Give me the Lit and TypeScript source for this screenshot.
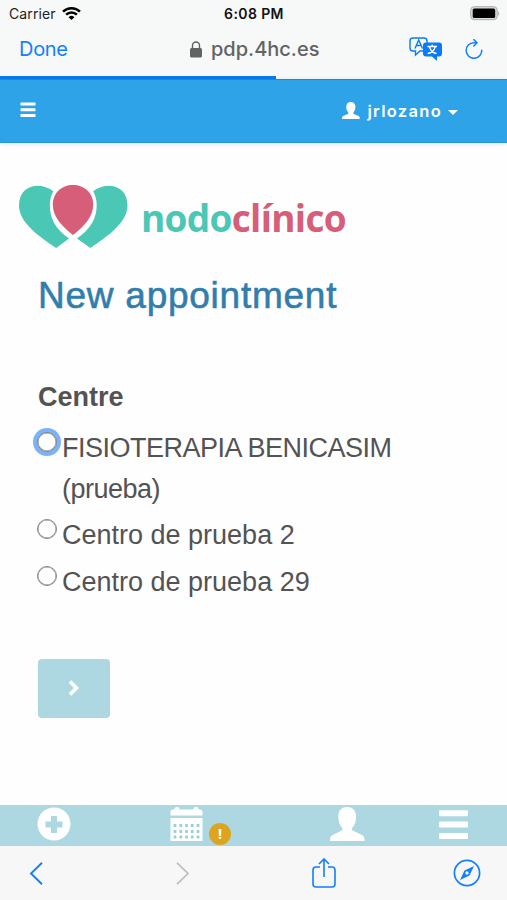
import { LitElement, html, css, svg } from "lit";
import { customElement, state } from "lit/decorators.js";
import { classMap } from "lit/directives/class-map.js";

const person = svg`<path d="M17 0C11.800 0 8.300 3.400 8.300 9.400c0 5 1.300 8.600 3.900 11.400.6 1.200.3 2.300-.9 3L3.200 27.700C.9 28.900 0 30 0 34h34.600c0-4-.9-5.100-3.200-6.300l-8.300-3.900c-1.200-.7-1.500-1.800-.9-3 2.600-2.800 3.900-6.400 3.900-11.400C26.100 3.400 22.400 0 17 0Z"/>`;

@customElement("app-root")
export class AppRoot extends LitElement {
  static styles = css`
    :host { display: flex; flex-direction: column; width: 507px; height: 900px; overflow: hidden; background: #fefefe; font-family: "Liberation Sans", Arial, sans-serif; color: #535353; }
    * { box-sizing: border-box; }
    svg { display: block; flex: none; }
    .status { height: 27px; flex: none; display: grid; grid-template-columns: 1fr auto 1fr; align-items: center; background: #f7f8f8; padding: 0 7px 0 9px; font: 14px/27px Inter, sans-serif; color: #222; }
    .carrier { display: flex; align-items: center; gap: 6px; letter-spacing: .1px; }
    .time { font-weight: 600; color: #111; letter-spacing: .4px; margin-right: 1px; }
    .battery { justify-self: end; }
    .browser { height: 49px; flex: none; display: flex; align-items: center; background: #f7f8f8; padding: 0 24px 5px 19px; font: 20px/44px Inter, sans-serif; }
    .done { color: #127ffb; width: 171px; letter-spacing: -.3px; }
    .domain { color: #636363; font-weight: 500; margin-left: 9px; width: 198px; }
    .reload { margin-left: 23px; }
    .progress { height: 3px; flex: none; background: #f7f8f8; }
    .loaded { height: 3px; width: 276px; background: #087bec; }
    .nav { height: 64px; flex: none; display: flex; align-items: center; background: #2fa3e7; border-top: 1px solid #2689c7; border-bottom: 1px solid #2896d9; box-shadow: 0 1px 5px #0000001c; padding: 0 49px 2px 20px; color: white; }
    .user { margin-left: auto; display: flex; align-items: center; font: 600 16.500px/20px Inter, sans-serif; letter-spacing: 1.300px; }
    .name { margin: 2px 6px 0 7px; }
    .caret { margin-top: 4px; }
    main { height: 662px; flex: none; padding: 42px 38px 0; }
    .brand { display: flex; margin-left: -19px; height: 64px; }
    .word { font: 700 37px/65px "Open Sans", sans-serif; letter-spacing: -.7px; margin-left: 12px; color: #4bc7b5; white-space: nowrap; }
    .accent { color: #d65e79; }
    h1 { margin: 25px 0 0; font-weight: 400; font-size: 37px; line-height: 44px; letter-spacing: .75px; color: #317eac; -webkit-text-stroke: .6px #317eac; white-space: nowrap; }
    h2 { margin: 63px 0 0; font-size: 27px; line-height: 32px; }
    .option { display: flex; align-items: flex-start; margin-top: 6px; font-size: 27px; line-height: 40.500px; }
    .first { margin-top: 15px; letter-spacing: -.5px; }
    .radio { width: 20px; height: 20px; flex: none; border: 1.500px solid #858585; border-radius: 50%; background: white; margin: 4px 5px 0 -1px; box-shadow: inset 0 0 0 .5px #858585; }
    .focus { box-shadow: 0 0 0 4px #7ab4f6, inset 0 0 0 .5px #858585; }
    .next { display: flex; align-items: center; justify-content: center; width: 72px; height: 59px; margin-top: 57px; padding: 0 0 1px; border: 0; border-radius: 4px; background: #add8e1; }
    .tabs { height: 41px; flex: none; display: flex; align-items: flex-start; background: #add8e1; padding: 2px 39px 0 37px; }
    .calendar { margin-left: 99px; }
    .alert { display: grid; place-items: center; width: 22px; height: 22px; margin: 16px 0 0 6px; border-radius: 50%; background: #dca51f; color: white; font: 700 14px/22px "Open Sans", sans-serif; }
    .profile { margin-left: 99px; }
    .menu { margin: 3px 0 0 74px; }
    .tools { height: 54px; flex: none; display: flex; align-items: center; background: #f7f7f7; padding: 0 26px 0 29px; }
    .forward { margin-left: 133px; }
    .share { margin-left: 122px; }
    .compass { margin-left: auto; }
  `;

  @state() private focused = 0;
  private centres = ["FISIOTERAPIA BENICASIM (prueba)", "Centro de prueba 2", "Centro de prueba 29"];

  render() {
    return html`
      <div class="status">
        <div class="carrier"><span>Carrier</span>
          <svg width="19" height="15" viewBox="0 0 19 15" fill="none" stroke="#000" stroke-width="2.500"><path d="M1 5.600a12.200 12.200 0 0 1 17 0M4.100 8.700a7.800 7.800 0 0 1 10.800 0"/><path d="M9.500 14 6.600 11.200a4.200 4.200 0 0 1 5.800 0Z" fill="#000" stroke="none"/></svg>
        </div>
        <span class="time">6:08 PM</span>
        <svg class="battery" width="30" height="15" viewBox="0 0 30 15"><rect x=".7" y=".7" width="26.500" height="13" rx="3.500" fill="#ddd" stroke="#aaa"/><rect x="2.700" y="2.500" width="22.500" height="9.500" rx="1.500"/><path d="M28.200 5v5q2-2.500 0-5" fill="#aaa"/></svg>
      </div>
      <div class="browser">
        <span class="done">Done</span>
        <svg width="12" height="17" viewBox="0 0 12 17"><rect y="7" width="12" height="9.500" rx="1.500" fill="#636363"/><path d="M2.500 8V4.500a3.500 3.500 0 0 1 7 0V8" fill="none" stroke="#636363" stroke-width="1.400"/></svg>
        <span class="domain">pdp.4hc.es</span>
        <svg width="33" height="24" viewBox="0 0 33 24"><path d="M4 1h11q3 0 3 3v7q0 3-3 3h-4l-4.500 4v-4H4q-3 0-3-3V4q0-3 3-3Z" fill="none" stroke="#087bf5" stroke-width="1.400"/><path d="m6 11.500 3.700-8.500 3.800 8.500M7.300 8.500h4.900" fill="none" stroke="#087bf5" stroke-width="1.400"/><path d="M17 5.500h13q3 0 3 3v8q0 3-3 3h-2V24l-5-4.500h-6q-3 0-3-3v-8q0-3 3-3Z" fill="#087bf5"/><path d="M18.500 9.500h9.500M23.200 7.500v2M20.500 10c1 3.500 4 6 7 6.500M26.200 10c-1 3.500-4.500 6-7.500 6.500" fill="none" stroke="#fff" stroke-width="1.300"/></svg>
        <svg class="reload" width="18" height="20" viewBox="0 0 18 20" fill="none" stroke="#127ffb" stroke-width="1.500"><path d="M16.700 10.700A7.800 7.800 0 1 1 8.900 3.700h3"/><path d="M8.400.2 12 3.800 8.400 7.500"/></svg>
      </div>
      <div class="progress"><div class="loaded"></div></div>
      <div class="nav">
        <svg width="16" height="16" viewBox="0 0 16 16" fill="#fff"><rect x=".5" y=".5" width="15" height="3" rx=".6"/><rect x=".5" y="6.200" width="15" height="3" rx=".6"/><rect x=".5" y="12" width="15" height="3" rx=".6"/></svg>
        <div class="user">
          <svg width="18" height="17" viewBox="0 0 35 34" preserveAspectRatio="none" fill="#fff">${person}</svg>
          <span class="name">jrlozano</span>
          <svg class="caret" width="10" height="5" viewBox="0 0 10 5" fill="#fff"><path d="M0 0h10L5 5Z"/></svg>
        </div>
      </div>
      <main>
        <div class="brand">
          <svg width="110" height="64" viewBox="0 0 110 64"><path d="M34.300 6.300C21-4 0 0 0 20.500c0 18 22 32 37.200 42.500L50 53.400C36 44 30.800 32.600 30.800 20c0-4.500 1-9 3.500-13.700ZM74.200 6.300C87.500-4 108.500 0 108.500 20.500c0 18-22 32-37.200 42.500L58 53.400C72 44 77.700 32.600 77.700 20c0-4.500-1-9-3.500-13.700Z" fill="#4bc7b5"/><path d="M54 0c11.500 0 20.200 8 20.200 19.500 0 13-10.200 22.500-20.200 30.500-10-8-20.200-17.500-20.200-30.500C33.800 8 42.500 0 54 0Z" fill="#d65e79"/></svg>
          <div class="word">nodo<span class="accent">clínico</span></div>
        </div>
        <h1>New appointment</h1>
        <h2>Centre</h2>
        ${this.centres.map((c, i) => html`<label class=${classMap({ option: true, first: i === 0 })} @click=${() => (this.focused = i)}><span class=${classMap({ radio: true, focus: i === this.focused })}></span><span>${c}</span></label>`)}
        <button class="next" aria-label="Next"><svg width="12" height="16" viewBox="0 0 12 16" fill="none" stroke="#fff" stroke-width="3.600"><path d="m2 1.500 6.500 6.500L2 14.500"/></svg></button>
      </main>
      <div class="tabs">
        <svg width="34" height="34" viewBox="0 0 34 34"><circle cx="17" cy="17" r="16.500" fill="#fff"/><path d="M17 9v17M8.500 17.500h17" stroke="#add8e1" stroke-width="6"/></svg>
        <svg class="calendar" width="33" height="34" viewBox="0 0 33 34" fill="#fff"><path d="M.5 8.500V5q0-2.500 2.500-2.500h1.500Q4.500 0 6 0h2q1.500 0 1.500 2.500h14Q23.500 0 25 0h2q1.500 0 1.500 2.500H30q2.500 0 2.500 2.500v3.500ZM.5 11h32v23H.5Z"/>
          ${[18.5, 24.5, 30].map(y => [5, 10.8, 16.5, 22.2, 28].map(x => svg`<rect x=${x - 1.4} y=${y - 1.4} width="2.800" height="2.800" rx=".4" fill="#9bcfd9"/>`))}
        </svg>
        <span class="alert">!</span>
        <svg class="profile" width="35" height="34" viewBox="0 0 35 34" fill="#fff">${person}</svg>
        <svg class="menu" width="29" height="30" viewBox="0 0 29 30" fill="#fff"><rect width="29" height="6" y=".2" rx="1"/><rect y="11.600" width="29" height="6" rx="1"/><rect y="23" width="29" height="6" rx="1"/></svg>
      </div>
      <div class="tools">
        <svg width="14" height="23" viewBox="0 0 14 23" fill="none" stroke="#127ffb" stroke-width="1.900"><path d="M13 .8 2 11.500l11 10.700"/></svg>
        <svg class="forward" width="14" height="23" viewBox="0 0 14 23" fill="none" stroke="#bdbdbd" stroke-width="1.700"><path d="m1 .8 11 10.700L1 22.200"/></svg>
        <svg class="share" width="24" height="30" viewBox="0 0 24 30" fill="none" stroke="#127ffb" stroke-width="1.600"><path d="M8 9H4Q1 9 1 12v14q0 3 3 3h16q3 0 3-3V12q0-3-3-3h-4M12 19V1.500M7 6l5-5 5 5"/></svg>
        <svg class="compass" width="28" height="28" viewBox="0 0 28 28"><circle cx="14" cy="14" r="12.600" fill="none" stroke="#127ffb" stroke-width="1.700"/><path fill-rule="evenodd" d="m21 7-4.500 9.500L7 21l4.500-9.500ZM14 12.300a1.700 1.700 0 1 0 0 3.400 1.700 1.700 0 0 0 0-3.400Z" fill="#127ffb"/></svg>
      </div>`;
  }
}
